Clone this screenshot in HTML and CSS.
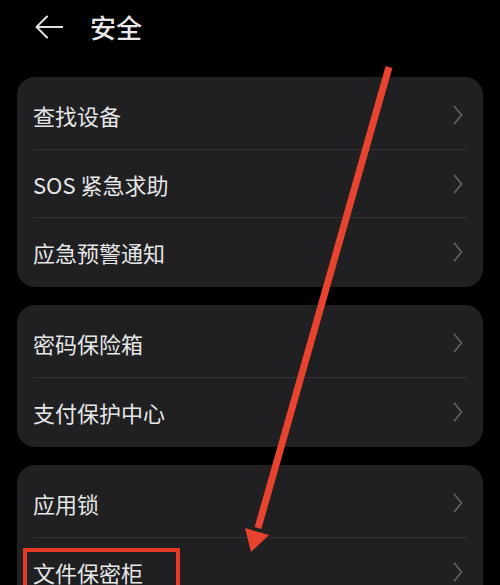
FILE: index.html
```html
<!DOCTYPE html>
<html lang="zh-CN">
<head>
<meta charset="utf-8">
<title>安全</title>
<link rel="stylesheet" href="styles.css">
</head>
<body>
<div class="page">
  <header class="topbar">
    <svg class="back" width="28" height="24" viewBox="0 0 28 24"><path d="M12 1.5 L1.5 12 L12 22.5 M1.5 12 H28" fill="none" stroke="#e2e2e2" stroke-width="2" stroke-linecap="round" stroke-linejoin="round"/></svg>
    <h1 class="title">安全</h1>
  </header>

  <section class="card">
    <div class="row"><span class="label">查找设备</span><svg class="chev" width="10" height="20" viewBox="0 0 10 20"><path d="M1.5 1.5 L8.5 10 L1.5 18.5" fill="none" stroke="#5e5e5e" stroke-width="1.8" stroke-linecap="round" stroke-linejoin="round"/></svg></div>
    <div class="row"><span class="label">SOS 紧急求助</span><svg class="chev" width="10" height="20" viewBox="0 0 10 20"><path d="M1.5 1.5 L8.5 10 L1.5 18.5" fill="none" stroke="#5e5e5e" stroke-width="1.8" stroke-linecap="round" stroke-linejoin="round"/></svg></div>
    <div class="row"><span class="label">应急预警通知</span><svg class="chev" width="10" height="20" viewBox="0 0 10 20"><path d="M1.5 1.5 L8.5 10 L1.5 18.5" fill="none" stroke="#5e5e5e" stroke-width="1.8" stroke-linecap="round" stroke-linejoin="round"/></svg></div>
  </section>

  <section class="card">
    <div class="row"><span class="label">密码保险箱</span><svg class="chev" width="10" height="20" viewBox="0 0 10 20"><path d="M1.5 1.5 L8.5 10 L1.5 18.5" fill="none" stroke="#5e5e5e" stroke-width="1.8" stroke-linecap="round" stroke-linejoin="round"/></svg></div>
    <div class="row"><span class="label">支付保护中心</span><svg class="chev" width="10" height="20" viewBox="0 0 10 20"><path d="M1.5 1.5 L8.5 10 L1.5 18.5" fill="none" stroke="#5e5e5e" stroke-width="1.8" stroke-linecap="round" stroke-linejoin="round"/></svg></div>
  </section>

  <section class="card">
    <div class="row"><span class="label">应用锁</span><svg class="chev" width="10" height="20" viewBox="0 0 10 20"><path d="M1.5 1.5 L8.5 10 L1.5 18.5" fill="none" stroke="#5e5e5e" stroke-width="1.8" stroke-linecap="round" stroke-linejoin="round"/></svg></div>
    <div class="row"><span class="label">文件保密柜</span><svg class="chev" width="10" height="20" viewBox="0 0 10 20"><path d="M1.5 1.5 L8.5 10 L1.5 18.5" fill="none" stroke="#5e5e5e" stroke-width="1.8" stroke-linecap="round" stroke-linejoin="round"/></svg><span class="highlight"></span></div>
  </section>

  <svg class="annot" width="500" height="585" viewBox="0 0 500 585">
    <line x1="389" y1="67" x2="258" y2="528" stroke="#e8432f" stroke-width="7" stroke-linecap="butt"/>
    <polygon points="251,552 245,528 269,535" fill="#e8432f"/>
  </svg>
</div>
</body>
</html>
```

FILE: styles.css
```css
html, body {
  margin: 0;
  padding: 0;
  background: #000;
}
body {
  font-family: "Noto Sans CJK SC", "Noto Sans", sans-serif;
  color: #e6e6e6;
}
.page {
  position: relative;
  width: 500px;
  height: 585px;
  overflow: hidden;
  padding: 0 17px;
  box-sizing: border-box;
}
.topbar {
  display: flex;
  align-items: center;
  height: 54px;
  padding-left: 18px;
  margin-bottom: 23px;
}
.back {
  display: block;
  margin-right: 27px;
}
.title {
  margin: 0;
  font-size: 26px;
  font-weight: 500;
  color: #e8e8e8;
  line-height: 1;
}
.card {
  background: #202022;
  border-radius: 18px;
  padding: 4px 16px 2px 16px;
  margin-bottom: 18px;
}
.row {
  position: relative;
  display: flex;
  align-items: center;
  justify-content: space-between;
  height: 68px;
  padding-right: 4px;
  box-sizing: border-box;
}
.row + .row {
  border-top: 1px solid #333336;
}
.label {
  font-size: 22px;
  line-height: 1;
  color: #e6e6e6;
}
.chev {
  display: block;
}
.highlight {
  position: absolute;
  left: -10px;
  top: 10px;
  width: 157px;
  height: 58px;
  border: 4px solid #e23a25;
  box-sizing: border-box;
}
.annot {
  position: absolute;
  left: 0;
  top: 0;
  pointer-events: none;
}
```
